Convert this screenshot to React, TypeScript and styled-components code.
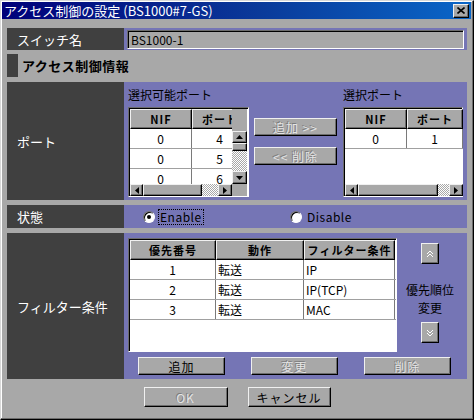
import React from 'react';
import styled, { createGlobalStyle, css } from 'styled-components';

const GRAY = '#a8a8a8';
const PURPLE = '#7575b5';
const DARK = '#404040';
const FONT = `"Noto Sans CJK JP", "Noto Sans", sans-serif`;

const Global = createGlobalStyle`
  html, body { margin: 0; padding: 0; background: ${GRAY}; }
  body { font-family: ${FONT}; color: #000; }
  * { box-sizing: border-box; }
`;

const raised = css`
  border: 1px solid;
  border-color: #f0f0f0 #000 #000 #f0f0f0;
  box-shadow: inset -1px -1px 0 #6c6c6c;
  background: ${GRAY};
`;

const sunken = css`
  border: 1px solid;
  border-color: #6c6c6c #fff #fff #6c6c6c;
  box-shadow: inset 1px 1px 0 #000;
`;

const checker = css`
  background: repeating-conic-gradient(#fff 0 25%, #a8a8a8 0 50%) 0 0 / 2px 2px;
`;

const Window = styled.div`
  width: 474px;
  height: 420px;
  border: 1px solid;
  border-color: #d8d8d8 #000 #000 #d8d8d8;
  box-shadow: inset -1px -1px 0 #6c6c6c, inset 1px 1px 0 #fff;
  background: ${GRAY};
  display: flex;
  flex-direction: column;
`;

const TitleBar = styled.div`
  margin: 1px 2px 0 1px;
  height: 17px;
  background: linear-gradient(to right, #00007a 0%, #0a3a9a 55%, #0a66c8 100%);
  display: flex;
  align-items: center;
  justify-content: space-between;
  padding: 0 2px 0 2px;
`;

const Title = styled.span`
  color: #fff;
  font-size: 13px;
  line-height: 17px;
  white-space: nowrap;
`;

const CloseBtn = styled.div`
  ${raised};
  width: 16px;
  height: 14px;
  display: flex;
  align-items: center;
  justify-content: center;
`;

const Body = styled.div`
  padding: 9px 5px 0 6px;
  display: flex;
  flex-direction: column;
  gap: 5px;
`;

const Row = styled.div<{ $h: number }>`
  display: grid;
  grid-template-columns: 117px 343px;
  height: ${(p) => p.$h}px;
`;

const Label = styled.div`
  background: ${DARK};
  color: #fff;
  font-size: 13px;
  display: flex;
  align-items: center;
  padding-left: 10px;
  white-space: nowrap;
`;

const Value = styled.div`
  background: ${PURPLE};
  min-width: 0;
`;

const NameValue = styled(Value)`
  padding: 2px 3px 1px 3px;
`;

const TextInput = styled.div`
  ${sunken};
  background: ${GRAY};
  height: 100%;
  font-size: 12px;
  display: flex;
  align-items: center;
  padding-left: 3px;
`;

const SectionHeader = styled.div`
  display: flex;
  align-items: center;
  gap: 4px;
  height: 23px;
`;

const Marker = styled.div`
  width: 11px;
  height: 100%;
  background: ${DARK};
`;

const SectionTitle = styled.span`
  font-size: 13px;
  font-weight: bold;
  letter-spacing: 0.5px;
`;

const PortValue = styled(Value)`
  display: flex;
  align-items: flex-start;
  padding: 6px 4px 0 4px;
`;

const PortBlock = styled.div`
  display: flex;
  flex-direction: column;
  gap: 5px;
`;

const BlockTitle = styled.div`
  font-size: 12px;
  line-height: 14px;
  white-space: nowrap;
`;

const PortTableBox = styled.div<{ $w: number; $cols: string }>`
  ${sunken};
  width: ${(p) => p.$w}px;
  height: 90px;
  background: #fff;
  display: grid;
  grid-template-columns: ${(p) => p.$cols};
  grid-template-rows: 20px 1fr 12px;
  padding: 1px 0 0 1px;
`;

const Clip = styled.div`
  overflow: hidden;
  min-width: 0;
  display: flex;
  flex-direction: column;
`;

const HeadRow = styled.div`
  display: flex;
  height: 20px;
`;

const HeadCell = styled.div<{ $w: number }>`
  ${raised};
  flex: none;
  width: ${(p) => p.$w}px;
  height: 100%;
  font-size: 11px;
  font-weight: bold;
  letter-spacing: 1px;
  display: flex;
  align-items: center;
  justify-content: center;
  white-space: nowrap;
`;

const Filler = styled.div`
  background: ${GRAY};
`;

const DataRow = styled.div`
  display: flex;
  flex: none;
  height: 20px;
  border-bottom: 1px solid #a0a0a0;
`;

const DataCell = styled.div<{ $w: number; $align?: string }>`
  flex: none;
  width: ${(p) => p.$w}px;
  border-right: 1px solid #7a7a7a;
  font-size: 12px;
  display: flex;
  align-items: center;
  justify-content: ${(p) => p.$align || 'center'};
  padding-left: ${(p) => (p.$align === 'flex-start' ? '2px' : '0')};
  white-space: nowrap;
`;

const VScroll = styled.div`
  display: flex;
  flex-direction: column;
  background: ${GRAY};
  padding-top: 2px;
`;

const HScroll = styled.div`
  display: flex;
  background: ${GRAY};
`;

const ArrowBtn = styled.div<{ $w: number; $h: number }>`
  ${raised};
  flex: none;
  width: ${(p) => p.$w}px;
  height: ${(p) => p.$h}px;
  display: flex;
  align-items: center;
  justify-content: center;
`;

const Thumb = styled.div<{ $w?: number; $h?: number }>`
  ${raised};
  flex: none;
  width: ${(p) => (p.$w ? `${p.$w}px` : 'auto')};
  height: ${(p) => (p.$h ? `${p.$h}px` : 'auto')};
`;

const Track = styled.div`
  ${checker};
  flex: 1;
`;

const MidButtons = styled.div`
  display: flex;
  flex-direction: column;
  gap: 11px;
  padding-top: 30px;
  margin: 0 6px 0 5px;
`;

const Button = styled.div<{ $w: number; $h: number; $disabled?: boolean }>`
  ${raised};
  width: ${(p) => p.$w}px;
  height: ${(p) => p.$h}px;
  font-size: 12px;
  display: flex;
  align-items: center;
  justify-content: center;
  white-space: nowrap;
  letter-spacing: 1px;
  color: ${(p) => (p.$disabled ? '#e4e4e4' : '#000')};
  text-shadow: ${(p) => (p.$disabled ? '-1px -1px 0 #7c7c7c' : 'none')};
`;

const StateValue = styled(Value)`
  display: grid;
  grid-template-columns: 147px auto;
  align-items: center;
  padding-left: 19px;
`;

const RadioItem = styled.div`
  display: flex;
  align-items: center;
  gap: 3px;
`;

const RadioCircle = styled.div<{ $on?: boolean }>`
  width: 12px;
  height: 12px;
  border-radius: 50%;
  background: #fff;
  border: 1px solid;
  border-color: #6c6c6c #fff #fff #6c6c6c;
  box-shadow: inset 1px 1px 0 #000;
  display: flex;
  align-items: center;
  justify-content: center;
  &::after {
    content: '';
    display: ${(p) => (p.$on ? 'block' : 'none')};
    width: 4px;
    height: 4px;
    border-radius: 50%;
    background: #000;
  }
`;

const RadioText = styled.span<{ $focus?: boolean }>`
  font-size: 12px;
  line-height: 14px;
  padding: 0 1px;
  border: 1px dotted ${(p) => (p.$focus ? '#000' : 'transparent')};
  letter-spacing: 0.5px;
`;

const FilterValue = styled(Value)`
  display: grid;
  grid-template-columns: 269px 1fr;
  grid-template-rows: 114px 18px;
  row-gap: 5px;
  padding: 5px 4px 4px 4px;
`;

const FilterTableBox = styled.div`
  ${sunken};
  background: #fff;
  padding: 1px 0 0 1px;
  display: flex;
  flex-direction: column;
`;

const SideCtl = styled.div`
  display: flex;
  flex-direction: column;
  align-items: center;
  padding: 5px 0 9px 0;
`;

const SideText = styled.div`
  font-size: 12px;
  line-height: 18px;
  text-align: center;
  margin-top: 17px;
  white-space: nowrap;
`;

const OrderBtn = styled.div<{ $bottom?: boolean }>`
  ${raised};
  width: 18px;
  height: 21px;
  display: flex;
  align-items: center;
  justify-content: center;
  margin-top: ${(p) => (p.$bottom ? 'auto' : '0')};
`;

const FilterButtons = styled.div`
  grid-column: 1 / span 2;
  display: flex;
  gap: 26px;
  padding-left: 10px;
`;

const Footer = styled.div`
  display: flex;
  justify-content: center;
  gap: 20px;
  padding-top: 8px;
`;

type Dir = 'up' | 'down' | 'left' | 'right';

const Tri = ({ dir }: { dir: Dir }) => {
  const pts: Record<Dir, string> = {
    up: '0,4 7,4 3.5,0',
    down: '0,0 7,0 3.5,4',
    left: '4,0 4,7 0,3.5',
    right: '0,0 0,7 4,3.5',
  };
  const vert = dir === 'up' || dir === 'down';
  return (
    <svg width={vert ? 7 : 4} height={vert ? 4 : 7} viewBox={vert ? '0 0 7 4' : '0 0 4 7'}>
      <polygon points={pts[dir]} fill="#000" />
    </svg>
  );
};

const Chevrons = ({ dir }: { dir: 'up' | 'down' }) => (
  <svg width="8" height="10" viewBox="0 0 8 10">
    {dir === 'up' ? (
      <path d="M1 5 L4 2 L7 5 M1 8 L4 5 L7 8" stroke="#fff" strokeWidth="1" fill="none" />
    ) : (
      <path d="M1 2 L4 5 L7 2 M1 5 L4 8 L7 5" stroke="#fff" strokeWidth="1" fill="none" />
    )}
  </svg>
);

const HBar = ({ thumb }: { thumb: number }) => (
  <HScroll>
    <ArrowBtn $w={13} $h={12}>
      <Tri dir="left" />
    </ArrowBtn>
    <Thumb $w={thumb} />
    <Track />
    <ArrowBtn $w={14} $h={12}>
      <Tri dir="right" />
    </ArrowBtn>
  </HScroll>
);

const PortRows = ({ rows }: { rows: [string, string][] }) => (
  <>
    {rows.map(([a, b], i) => (
      <DataRow key={i}>
        <DataCell $w={62}>{a}</DataCell>
        <DataCell $w={56}>{b}</DataCell>
      </DataRow>
    ))}
  </>
);

const filters: [string, string, string][] = [
  ['1', '転送', 'IP'],
  ['2', '転送', 'IP(TCP)'],
  ['3', '転送', 'MAC'],
];

export default function App() {
  return (
    <>
      <Global />
      <Window>
        <TitleBar>
          <Title>アクセス制御の設定 (BS1000#7-GS)</Title>
          <CloseBtn>
            <svg width="8" height="7" viewBox="0 0 8 7">
              <path d="M0.5 0.5 L7.5 6.5 M7.5 0.5 L0.5 6.5" stroke="#000" strokeWidth="1.6" />
            </svg>
          </CloseBtn>
        </TitleBar>
        <Body>
          <Row $h={21}>
            <Label>スイッチ名</Label>
            <NameValue>
              <TextInput>BS1000-1</TextInput>
            </NameValue>
          </Row>
          <SectionHeader>
            <Marker />
            <SectionTitle>アクセス制御情報</SectionTitle>
          </SectionHeader>
          <Row $h={118}>
            <Label>ポート</Label>
            <PortValue>
              <PortBlock>
                <BlockTitle>選択可能ポート</BlockTitle>
                <PortTableBox $w={121} $cols="102px 15px">
                  <Clip>
                    <HeadRow>
                      <HeadCell $w={62}>NIF</HeadCell>
                      <HeadCell $w={56}>ポート</HeadCell>
                    </HeadRow>
                  </Clip>
                  <Filler />
                  <Clip>
                    <PortRows rows={[['0', '4'], ['0', '5'], ['0', '6']]} />
                  </Clip>
                  <VScroll>
                    <ArrowBtn $w={15} $h={12}>
                      <Tri dir="up" />
                    </ArrowBtn>
                    <Thumb $h={8} />
                    <Track />
                    <ArrowBtn $w={15} $h={13}>
                      <Tri dir="down" />
                    </ArrowBtn>
                  </VScroll>
                  <HBar thumb={59} />
                  <Filler />
                </PortTableBox>
              </PortBlock>
              <MidButtons>
                <Button $w={83} $h={18} $disabled>
                  追加 &gt;&gt;
                </Button>
                <Button $w={83} $h={18} $disabled>
                  &lt;&lt; 削除
                </Button>
              </MidButtons>
              <PortBlock>
                <BlockTitle>選択ポート</BlockTitle>
                <PortTableBox $w={120} $cols="118px">
                  <HeadRow>
                    <HeadCell $w={62}>NIF</HeadCell>
                    <HeadCell $w={56}>ポート</HeadCell>
                  </HeadRow>
                  <Clip>
                    <PortRows rows={[['0', '1']]} />
                  </Clip>
                  <HBar thumb={80} />
                </PortTableBox>
              </PortBlock>
            </PortValue>
          </Row>
          <Row $h={23}>
            <Label>状態</Label>
            <StateValue>
              <RadioItem>
                <RadioCircle $on />
                <RadioText $focus>Enable</RadioText>
              </RadioItem>
              <RadioItem>
                <RadioCircle />
                <RadioText>Disable</RadioText>
              </RadioItem>
            </StateValue>
          </Row>
          <Row $h={146}>
            <Label>フィルター条件</Label>
            <FilterValue>
              <FilterTableBox>
                <HeadRow>
                  <HeadCell $w={86}>優先番号</HeadCell>
                  <HeadCell $w={88}>動作</HeadCell>
                  <HeadCell $w={91}>フィルター条件</HeadCell>
                </HeadRow>
                {filters.map(([n, act, cond]) => (
                  <DataRow key={n}>
                    <DataCell $w={86}>{n}</DataCell>
                    <DataCell $w={88} $align="flex-start">
                      {act}
                    </DataCell>
                    <DataCell $w={91} $align="flex-start">
                      {cond}
                    </DataCell>
                  </DataRow>
                ))}
              </FilterTableBox>
              <SideCtl>
                <OrderBtn>
                  <Chevrons dir="up" />
                </OrderBtn>
                <SideText>
                  優先順位
                  <br />
                  変更
                </SideText>
                <OrderBtn $bottom>
                  <Chevrons dir="down" />
                </OrderBtn>
              </SideCtl>
              <FilterButtons>
                <Button $w={87} $h={18}>
                  追加
                </Button>
                <Button $w={87} $h={18} $disabled>
                  変更
                </Button>
                <Button $w={87} $h={18} $disabled>
                  削除
                </Button>
              </FilterButtons>
            </FilterValue>
          </Row>
        </Body>
        <Footer>
          <Button $w={84} $h={20} $disabled>
            OK
          </Button>
          <Button $w={83} $h={20}>
            キャンセル
          </Button>
        </Footer>
      </Window>
    </>
  );
}
